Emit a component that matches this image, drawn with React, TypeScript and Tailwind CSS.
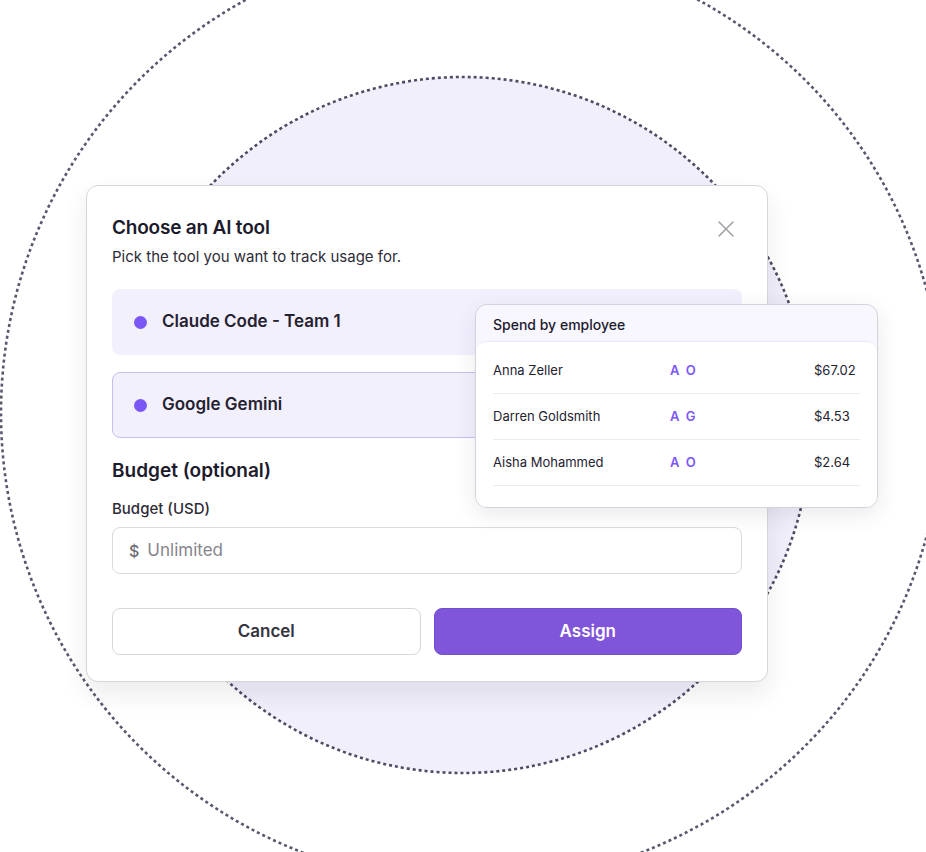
import React from "react";

type Row = { name: string; initials: string; amount: string };

const rows: Row[] = [
  { name: "Anna Zeller", initials: "A O", amount: "$67.02" },
  { name: "Darren Goldsmith", initials: "A G", amount: "$4.53" },
  { name: "Aisha Mohammed", initials: "A O", amount: "$2.64" },
];

function Backdrop() {
  return (
    <svg
      className="absolute inset-0"
      width={926}
      height={852}
      viewBox="0 0 926 852"
      fill="none"
    >
      <circle
        cx={472}
        cy={413}
        r={471}
        stroke="#57576e"
        strokeWidth={2.6}
        strokeDasharray="3 3"
      />
      <circle
        cx={463}
        cy={425}
        r={348}
        fill="#f1effb"
        stroke="#4c4c64"
        strokeWidth={2.6}
        strokeDasharray="3 3"
      />
    </svg>
  );
}

function ToolOption({ label, selected }: { label: string; selected?: boolean }) {
  return (
    <div
      className={
        selected
          ? "flex h-[66px] items-center gap-[15px] rounded-lg border border-[#c9bef2] bg-[#f3f0fe] pl-[21px]"
          : "flex h-[66px] items-center gap-[15px] rounded-lg border border-transparent bg-[#f3f0fe] pl-[21px]"
      }
    >
      <span className="h-[13px] w-[13px] rounded-full bg-[#7b57f5]" />
      <span className="text-[17px] font-semibold text-[#25222f]">{label}</span>
    </div>
  );
}

function Dialog() {
  return (
    <div className="w-[682px] rounded-[12px] border border-[#d6d6da] bg-white px-[25px] pb-[26px] pt-[30px] shadow-[0_12px_26px_rgba(30,30,60,0.09)]">
      <div className="flex items-start justify-between">
        <div>
          <h2 className="text-[19px] font-semibold leading-[24px] tracking-[-0.2px] text-[#1d1a2c]">
            Choose an AI tool
          </h2>
          <p className="mt-[7px] text-[15px] leading-[20px] text-[#2e2c38]">
            Pick the tool you want to track usage for.
          </p>
        </div>
        <svg
          width={18}
          height={18}
          viewBox="0 0 18 18"
          className="mr-[7px] mt-[4px]"
          stroke="#a2a2a6"
          strokeWidth={1.6}
          strokeLinecap="round"
        >
          <path d="M2 2 L16 16 M16 2 L2 16" />
        </svg>
      </div>

      <div className="mt-[22px] flex flex-col gap-[17px]">
        <ToolOption label="Claude Code - Team 1" />
        <ToolOption label="Google Gemini" selected />
      </div>

      <h3 className="mt-[21px] text-[19px] font-semibold leading-[24px] text-[#1d1a2c]">
        Budget (optional)
      </h3>
      <label className="mt-[16px] block text-[15px] font-medium leading-[20px] text-[#2e2c38]">
        Budget (USD)
      </label>
      <div className="mt-[8px] flex h-[47px] items-center gap-[8px] rounded-lg border border-[#dadadd] pl-[16px]">
        <span className="text-[16px] font-medium text-[#6b6b72]">$</span>
        <span className="text-[17px] text-[#85858c]">Unlimited</span>
      </div>

      <div className="mt-[34px] grid grid-cols-2 gap-[13px]">
        <button className="h-[47px] rounded-lg border border-[#d8d8dc] bg-white text-[17px] font-semibold text-[#333340]">
          Cancel
        </button>
        <button className="h-[47px] rounded-lg border border-[#7150cc] bg-[#7f56d9] text-[17px] font-semibold text-white">
          Assign
        </button>
      </div>
    </div>
  );
}

function SpendCard() {
  return (
    <div className="absolute left-[475px] top-[304px] w-[403px] overflow-hidden rounded-[12px] border border-[#d4d3da] bg-[#f8f6fe] shadow-[0_6px_22px_rgba(40,40,70,0.1)]">
      <div className="px-[17px] pb-[7px] pt-[11px] text-[14px] font-medium leading-[18px] text-[#1d1a2c]">
        Spend by employee
      </div>
      <div className="rounded-t-[10px] border-t border-[#ebe7f8] bg-white px-[17px] pb-[21px] pt-[6px]">
        {rows.map((r) => (
          <div
            key={r.name}
            className="flex h-[46px] items-center border-b border-[#ecebf1] text-[13px] text-[#25222f]"
          >
            <span className="w-[177px]">{r.name}</span>
            <span className="w-[144px] font-semibold tracking-[1.5px] text-[#7b57f5]">
              {r.initials}
            </span>
            <span>{r.amount}</span>
          </div>
        ))}
      </div>
    </div>
  );
}

export default function App() {
  return (
    <div className="relative h-[852px] w-[926px] overflow-hidden bg-white font-['Inter',sans-serif]">
      <Backdrop />
      <div className="relative pl-[86px] pt-[185px]">
        <Dialog />
      </div>
      <SpendCard />
    </div>
  );
}
